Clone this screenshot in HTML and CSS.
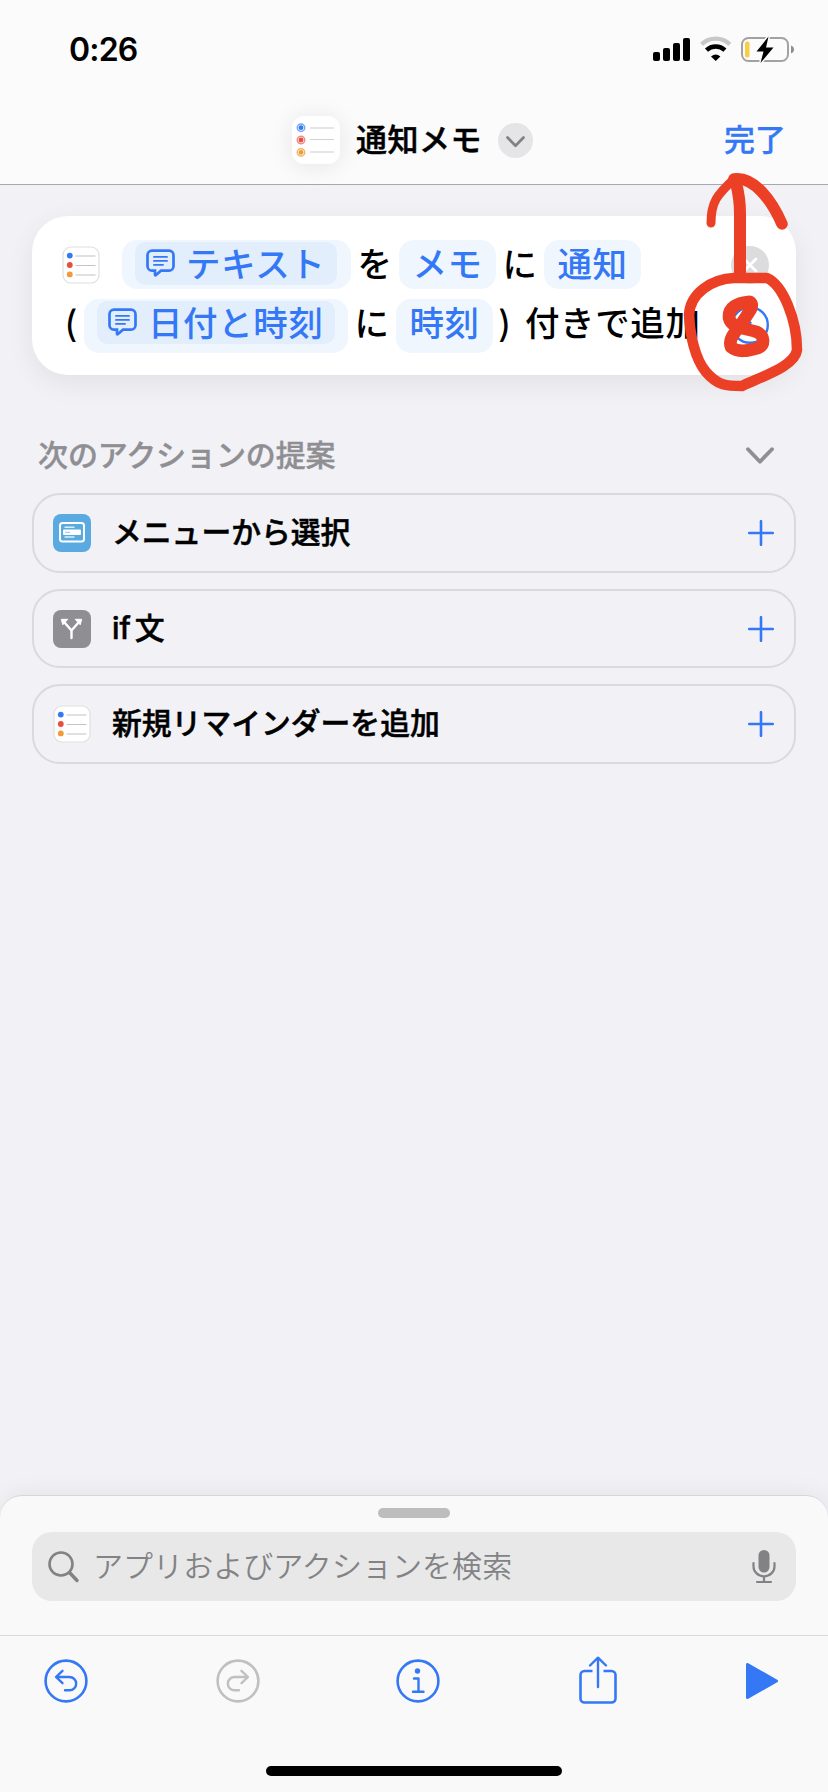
FILE: index.html
```html
<!DOCTYPE html>
<html lang="ja">
<head>
<meta charset="utf-8">
<title>通知メモ</title>
<link rel="stylesheet" href="styles.css">
</head>
<body>
<svg class="defs" width="0" height="0">
  <symbol id="reminders" viewBox="0 0 38 38">
    <rect x="1" y="1" width="36" height="36" rx="8" fill="#fff" stroke="#dfdfe2" stroke-width="1.2"/>
    <circle cx="7.8" cy="9.6" r="2.9" fill="#3478f6"/><circle cx="7.8" cy="19" r="2.9" fill="#eb4d3d"/><circle cx="7.8" cy="28.4" r="2.9" fill="#f19a37"/>
    <path d="M13.5 10h20M13.5 29h20" stroke="#e0e0e0" stroke-width="1.8"/><path d="M13.5 19.5h20" stroke="#c4c4c8" stroke-width="1"/>
  </symbol>
  <symbol id="bubble" viewBox="0 0 30 28">
    <path d="M6 1.7h17a4.5 4.5 0 0 1 4.5 4.5v11a4.5 4.5 0 0 1-4.5 4.5H15l-5 4.300q-1 .8-1-.5v-3.800H6a4.500 4.500 0 0 1-4.500-4.500v-11A4.500 4.500 0 0 1 6 1.700z" fill="none" stroke="#3478f6" stroke-width="2.700"/>
    <path d="M8 7.900h13M8 11.900h13M8 15.900h9" stroke="#3478f6" stroke-width="1.900" stroke-linecap="round"/>
  </symbol>
  <symbol id="plus" viewBox="0 0 26 26"><path d="M13 1.200v23.600M1.200 13h23.600" stroke="#3478f6" stroke-width="2.600" stroke-linecap="round"/></symbol>
</svg>
<div class="screen">
  <header class="header">
    <div class="status">
      <span class="time">0:26</span>
      <svg class="status-icons" width="143" height="30" viewBox="0 0 143 30">
        <g><rect x="0" y="17" width="7" height="9" rx="2"/><rect x="10" y="13" width="7" height="13" rx="2"/><rect x="20" y="8" width="7" height="18" rx="2"/><rect x="30" y="3" width="7" height="23" rx="2"/></g>
        <path d="M48.500 9.300a20.500 20.500 0 0 1 28.400 0" fill="none" stroke="#c8c8ca" stroke-width="4.200"/>
        <path d="M53.500 15.200a13.300 13.300 0 0 1 18.400 0" fill="none" stroke="#000" stroke-width="4.400"/>
        <path d="M58 21.500q4.700-4.200 9.400 0L62.700 26z"/>
        <rect x="89" y="3" width="46" height="23" rx="6.500" fill="none" stroke="#a2a2a4" stroke-width="2"/>
        <rect x="92" y="6.500" width="4.500" height="16" rx="2" fill="#f7ce46"/>
        <path d="M138 10.500q3 1.200 3 4t-3 4z" fill="#8e8e90"/>
        <path d="M115.500 1.500L103.500 16.500h7l-3 11.500 13-15.500h-7.500z" stroke="#fbfbfb" stroke-width="3" paint-order="stroke"/>
      </svg>
    </div>
    <div class="nav">
      <div class="title">
        <svg class="app-icon" width="48" height="48" viewBox="0 0 48 48">
          <g fill="none" stroke-width="1.500"><circle cx="9" cy="11.700" r="3.700" stroke="#76a7f6"/><circle cx="9" cy="24" r="3.700" stroke="#ed8b83"/><circle cx="9" cy="36.400" r="3.700" stroke="#efb769"/></g>
          <circle cx="9" cy="11.700" r="2.400" fill="#3478f6"/><circle cx="9" cy="24" r="2.400" fill="#eb4d3d"/><circle cx="9" cy="36.400" r="2.400" fill="#f19a37"/>
          <path d="M18 12h24M18 36h24" stroke="#e6e6e6" stroke-width="2"/><path d="M18 23.500h24" stroke="#d2d2d4" stroke-width="1"/>
        </svg>
        <h1>通知メモ</h1>
        <svg width="35" height="35" viewBox="0 0 35 35"><circle cx="17.500" cy="17.500" r="17.500" fill="#e5e5e7"/><path d="M9.500 14.500l8 8.300 8-8.300" fill="none" stroke="#818184" stroke-width="2.700" stroke-linecap="round" stroke-linejoin="round"/></svg>
      </div>
      <span class="done">完了</span>
    </div>
  </header>

  <main class="content">
    <section class="card">
      <div class="summary">
        <div class="line line-one">
          <svg class="line-icon" width="38" height="38"><use href="#reminders"/></svg>
          <span class="pill wide"><span class="variable"><svg width="30" height="28"><use href="#bubble"/></svg>テキスト</span></span>
          <span class="word">を</span>
          <span class="pill">メモ</span>
          <span class="word">に</span>
          <span class="pill">通知</span>
        </div>
        <div class="line line-two">
          <span class="paren open">(</span>
          <span class="pill wide"><span class="variable"><svg width="30" height="28"><use href="#bubble"/></svg>日付と時刻</span></span>
          <span class="word">に</span>
          <span class="pill">時刻</span>
          <span class="paren close">)</span>
          <span class="tail">付きで追加</span>
        </div>
      </div>
      <div class="controls">
        <svg width="38" height="38" viewBox="0 0 38 38"><circle cx="19" cy="19" r="19" fill="#dcdcde"/><path d="M13 13l12 12M25 13L13 25" stroke="#fff" stroke-width="2.800" stroke-linecap="round"/></svg>
        <svg width="38" height="38" viewBox="0 0 38 38" fill="none" stroke="#3478f6" stroke-width="2.400" stroke-linecap="round" stroke-linejoin="round"><circle cx="19" cy="19" r="17.800"/><path d="M11 16.500l4.500 9.500 4-9.500"/></svg>
      </div>
    </section>

    <div class="section-head">
      <h2>次のアクションの提案</h2>
      <svg class="collapse" width="28" height="18" viewBox="0 0 28 18"><path d="M2 2.200l12 12.500L26 2.200" fill="none" stroke="#8e8e93" stroke-width="3.800" stroke-linecap="round" stroke-linejoin="round"/></svg>
    </div>

    <div class="suggestions">
      <div class="suggestion">
        <svg width="38" height="38" viewBox="0 0 38 38"><rect width="38" height="38" rx="8" fill="#5aaae2"/><rect x="7" y="9" width="24" height="18.500" rx="2.500" fill="none" stroke="#fff" stroke-width="2"/><path d="M11.500 13.300h10M11.500 23h10" stroke="#fff" stroke-opacity=".8" stroke-width="1.500"/><rect x="10" y="15.500" width="18" height="5.500" rx="1" fill="#fff"/><path d="M12 18.300h5" stroke="#9fcdf0" stroke-width="1.200"/></svg>
        <span class="label">メニューから選択</span>
        <svg width="26" height="26"><use href="#plus"/></svg>
      </div>
      <div class="suggestion">
        <svg width="38" height="38" viewBox="0 0 38 38"><rect width="38" height="38" rx="8" fill="#8e8e93"/><path d="M18.500 28v-7.500L11.500 12.500M18.500 20.500L25.500 12.500" fill="none" stroke="#fff" stroke-width="2.400" stroke-linecap="round"/><path d="M8.300 9.300h6.500l-5 5.500zM28.700 9.300h-6.500l5 5.500z" fill="#fff" stroke="#fff" stroke-linejoin="round"/></svg>
        <span class="label">if<span class="kanji">文</span></span>
        <svg width="26" height="26"><use href="#plus"/></svg>
      </div>
      <div class="suggestion">
        <svg width="38" height="38"><use href="#reminders"/></svg>
        <span class="label">新規リマインダーを追加</span>
        <svg width="26" height="26"><use href="#plus"/></svg>
      </div>
    </div>
  </main>

  <footer class="sheet">
    <div class="grabber"></div>
    <div class="search">
      <svg width="32" height="32" viewBox="0 0 32 32" fill="none" stroke="#828285" stroke-linecap="round"><circle cx="13" cy="13" r="11.500" stroke-width="2.600"/><path d="M21.500 21.500l7.500 8" stroke-width="3.400"/></svg>
      <span class="placeholder">アプリおよびアクションを検索</span>
      <svg width="24" height="35" viewBox="0 0 24 35"><rect x="6.500" y="1" width="11" height="22.500" rx="5.500" fill="#828285"/><path d="M1.500 14v3.500a10.500 9.800 0 0 0 21 0V14M12 27.500v5M5 33h14" fill="none" stroke="#828285" stroke-width="2.200" stroke-linecap="round"/></svg>
    </div>
    <div class="toolbar">
      <svg width="44" height="44" viewBox="0 0 44 44" fill="none" stroke="#3478f6" stroke-width="2.600" stroke-linecap="round" stroke-linejoin="round"><circle cx="22" cy="22" r="20.400"/><path d="M18.500 11.800l-6.500 6.200 6.500 6.200M12.500 18h13a6.600 6.600 0 0 1 0 13.300h-4.500" stroke-width="2.400"/></svg>
      <svg class="redo" width="44" height="44" viewBox="0 0 44 44" fill="none" stroke="#c0c0c1" stroke-width="2.600" stroke-linecap="round" stroke-linejoin="round"><circle cx="22" cy="22" r="20.400"/><path d="M25.500 11.800l6.500 6.200-6.500 6.200M31.500 18h-13a6.600 6.600 0 0 0 0 13.300h4.500" stroke-width="2.400"/></svg>
      <svg class="info" width="44" height="44" viewBox="0 0 44 44" fill="none" stroke="#3478f6" stroke-width="2.600" stroke-linecap="round"><circle cx="22" cy="22" r="20.400"/><circle cx="21.500" cy="12" r="2.700" fill="#3478f6" stroke="none"/><path d="M18 19.500h4.500v13M17 32.700h10.500" stroke-width="2.400" stroke-linejoin="round"/></svg>
      <svg class="share" width="38" height="48" viewBox="0 0 38 48" fill="none" stroke="#3478f6" stroke-width="2.600"><path d="M13.500 15H5.500a4 4 0 0 0-4 4v23.500a4 4 0 0 0 4 4h27a4 4 0 0 0 4-4V19a4 4 0 0 0-4-4h-8"/><path d="M19 31V2M11 9.500L19 1.700l8 7.800" stroke-linecap="round" stroke-linejoin="round" stroke-width="2.400"/></svg>
      <svg class="play" width="32" height="36" viewBox="0 0 32 36"><path d="M1.500 1.500v33L30.500 18z" fill="#3478f6" stroke="#3478f6" stroke-width="3" stroke-linejoin="round"/></svg>
    </div>
    <div class="home"></div>
  </footer>

  <svg class="annotation" width="828" height="420" viewBox="0 0 828 420" fill="none" stroke="#eb4025" stroke-linecap="round" stroke-linejoin="round">
    <path d="M711 223C711 202 717 195 734 179" stroke-width="9"/>
    <path d="M734 179C754 176 772 201 782 224" stroke-width="11.500"/>
    <path d="M736 183Q740 198 740 214L740 275" stroke-width="12"/>
    <path d="M734 278H767C783 285 797 320 797 350C795 366 763 376 742 386C727 386 718 386 706 372C695 359 690 335 689 315C690 293 712 279 734 278Z" stroke-width="10.500"/>
    <path d="M748 302C738 303 728 307 729 318C731 328 745 328 757 332C765 336 765 345 758 348C748 351 738 353 731 347C728 340 734 333 740 326L751 309C753 304 751 301 748 302" stroke-width="12.500"/>
  </svg>
</div>
</body>
</html>
```
FILE: styles.css
```css
* { box-sizing: border-box; }
body {
  margin: 0;
  background: #f1f1f6;
  font-family: Inter, "Noto Sans CJK JP", sans-serif;
  color: #000;
}
svg { display: block; flex: none; }
.defs { position: absolute; }
h1, h2 { margin: 0; }
.screen {
  position: relative;
  width: 828px;
  height: 1792px;
  display: flex;
  flex-direction: column;
  overflow: hidden;
}
.header {
  height: 185px;
  background: #fbfbfc;
  border-bottom: 1px solid #a8a8ac;
}
.status {
  height: 99px;
  padding: 0 32px 0 69px;
  display: flex;
  justify-content: space-between;
  align-items: center;
}
.time { font-size: 32px; font-weight: 600; letter-spacing: -0.8px; }
.nav {
  height: 82px;
  display: flex;
  align-items: center;
  justify-content: space-between;
  padding: 0 42px 0 292px;
}
.title { display: flex; align-items: center; }
.app-icon {
  border-radius: 12px;
  background: #fff;
  box-shadow: 0 2px 24px rgba(0, 0, 0, .09);
}
h1, .label { -webkit-text-stroke: .5px currentColor; }
h1 { margin: 0 16px; font-size: 31px; line-height: 44px; font-weight: 500; letter-spacing: .5px; }
.done { font-size: 31px; line-height: 44px; font-weight: 500; color: #3478f6; -webkit-text-stroke: .3px currentColor; }
.content { flex: 1; padding: 31px 32px 0; }
.card {
  height: 159px;
  border-radius: 36px;
  background: #fff;
  box-shadow: 0 8px 28px rgba(0, 0, 0, .07);
  padding: 24px 27px 0 30px;
  display: flex;
  justify-content: space-between;
}
.summary { font-size: 34.500px; font-weight: 500; letter-spacing: .6px; white-space: nowrap; width: 640px; }
.line { display: flex; line-height: 49px; }
.line > * { flex: none; }
.line-one { height: 59px; }
.line-icon { margin: 6px 22px 0 0; }
.pill {
  width: 97px;
  height: 49px;
  border-radius: 15px;
  background: #f0f6fe;
  color: #3478f6;
  display: flex;
  justify-content: center;
}
.line-two .pill { height: 54px; }
.pill.wide { width: 229px; padding: 2px 14px 0 13px; display: block; }
.line-two .pill.wide { width: 264px; padding-right: 13px; }
.variable {
  height: 43px;
  border-radius: 10px;
  background: #e3eefd;
  line-height: 45px;
  padding-left: 11px;
  display: flex;
  gap: 10px;
}
.variable svg { margin-top: 7px; }
.word { width: 48px; text-align: center; }
.line-two > * { line-height: 50px; }
.paren { width: 22px; font-weight: 400; font-size: 37px; }
.open { padding-left: 2px; }
.close { width: 32px; padding-left: 5px; }
.controls { display: flex; flex-direction: column; gap: 22px; padding-top: 6px; }
.section-head {
  height: 118px;
  padding: 37px 22px 0 6px;
  display: flex;
  align-items: center;
  justify-content: space-between;
  color: #8e8e93;
}
.collapse { margin-top: 6px; }
h2 { font-size: 30px; font-weight: 500; letter-spacing: -.1px; -webkit-text-stroke: .4px currentColor; }
.suggestions { display: grid; grid-template-rows: 80px 79px 80px; gap: 16px; }
.suggestion {
  border: 2px solid #d9d9de;
  border-radius: 28px;
  padding: 0 20px 0 19px;
  display: flex;
  align-items: center;
}
.label { flex: 1; margin: 0 0 2px 21px; font-size: 29.800px; line-height: 40px; font-weight: 500; }
.kanji { margin-left: 4px; }
.sheet {
  height: 297px;
  border-radius: 22px 22px 0 0;
  border-top: 1px solid #d5d5da;
  background: #f9f9f9;
  box-shadow: 0 0 24px rgba(0, 0, 0, .07);
}
.grabber { width: 72px; height: 10px; border-radius: 5px; background: #bdbdbe; margin: 12px auto 14px; }
.search {
  height: 69px;
  margin: 0 32px 34px;
  padding: 0 20px 0 16px;
  border-radius: 20px;
  background: #e8e8e8;
  display: flex;
  align-items: center;
}
.placeholder { flex: 1; margin: 0 0 5px 13px; font-size: 30px; font-weight: 350; letter-spacing: .05px; color: #838386; }
.toolbar {
  height: 91px;
  border-top: 1px solid #dadadb;
  padding-left: 44px;
  display: flex;
  align-items: center;
}
.redo { margin-left: 128px; }
.info { margin-left: 136px; }
.share { margin: 0 0 3px 139px; }
.play { margin-left: 129px; }
.home { width: 296px; height: 10px; border-radius: 5px; background: #000; margin: 40px auto 0; }
.annotation { position: absolute; left: 0; top: 0; }
```
